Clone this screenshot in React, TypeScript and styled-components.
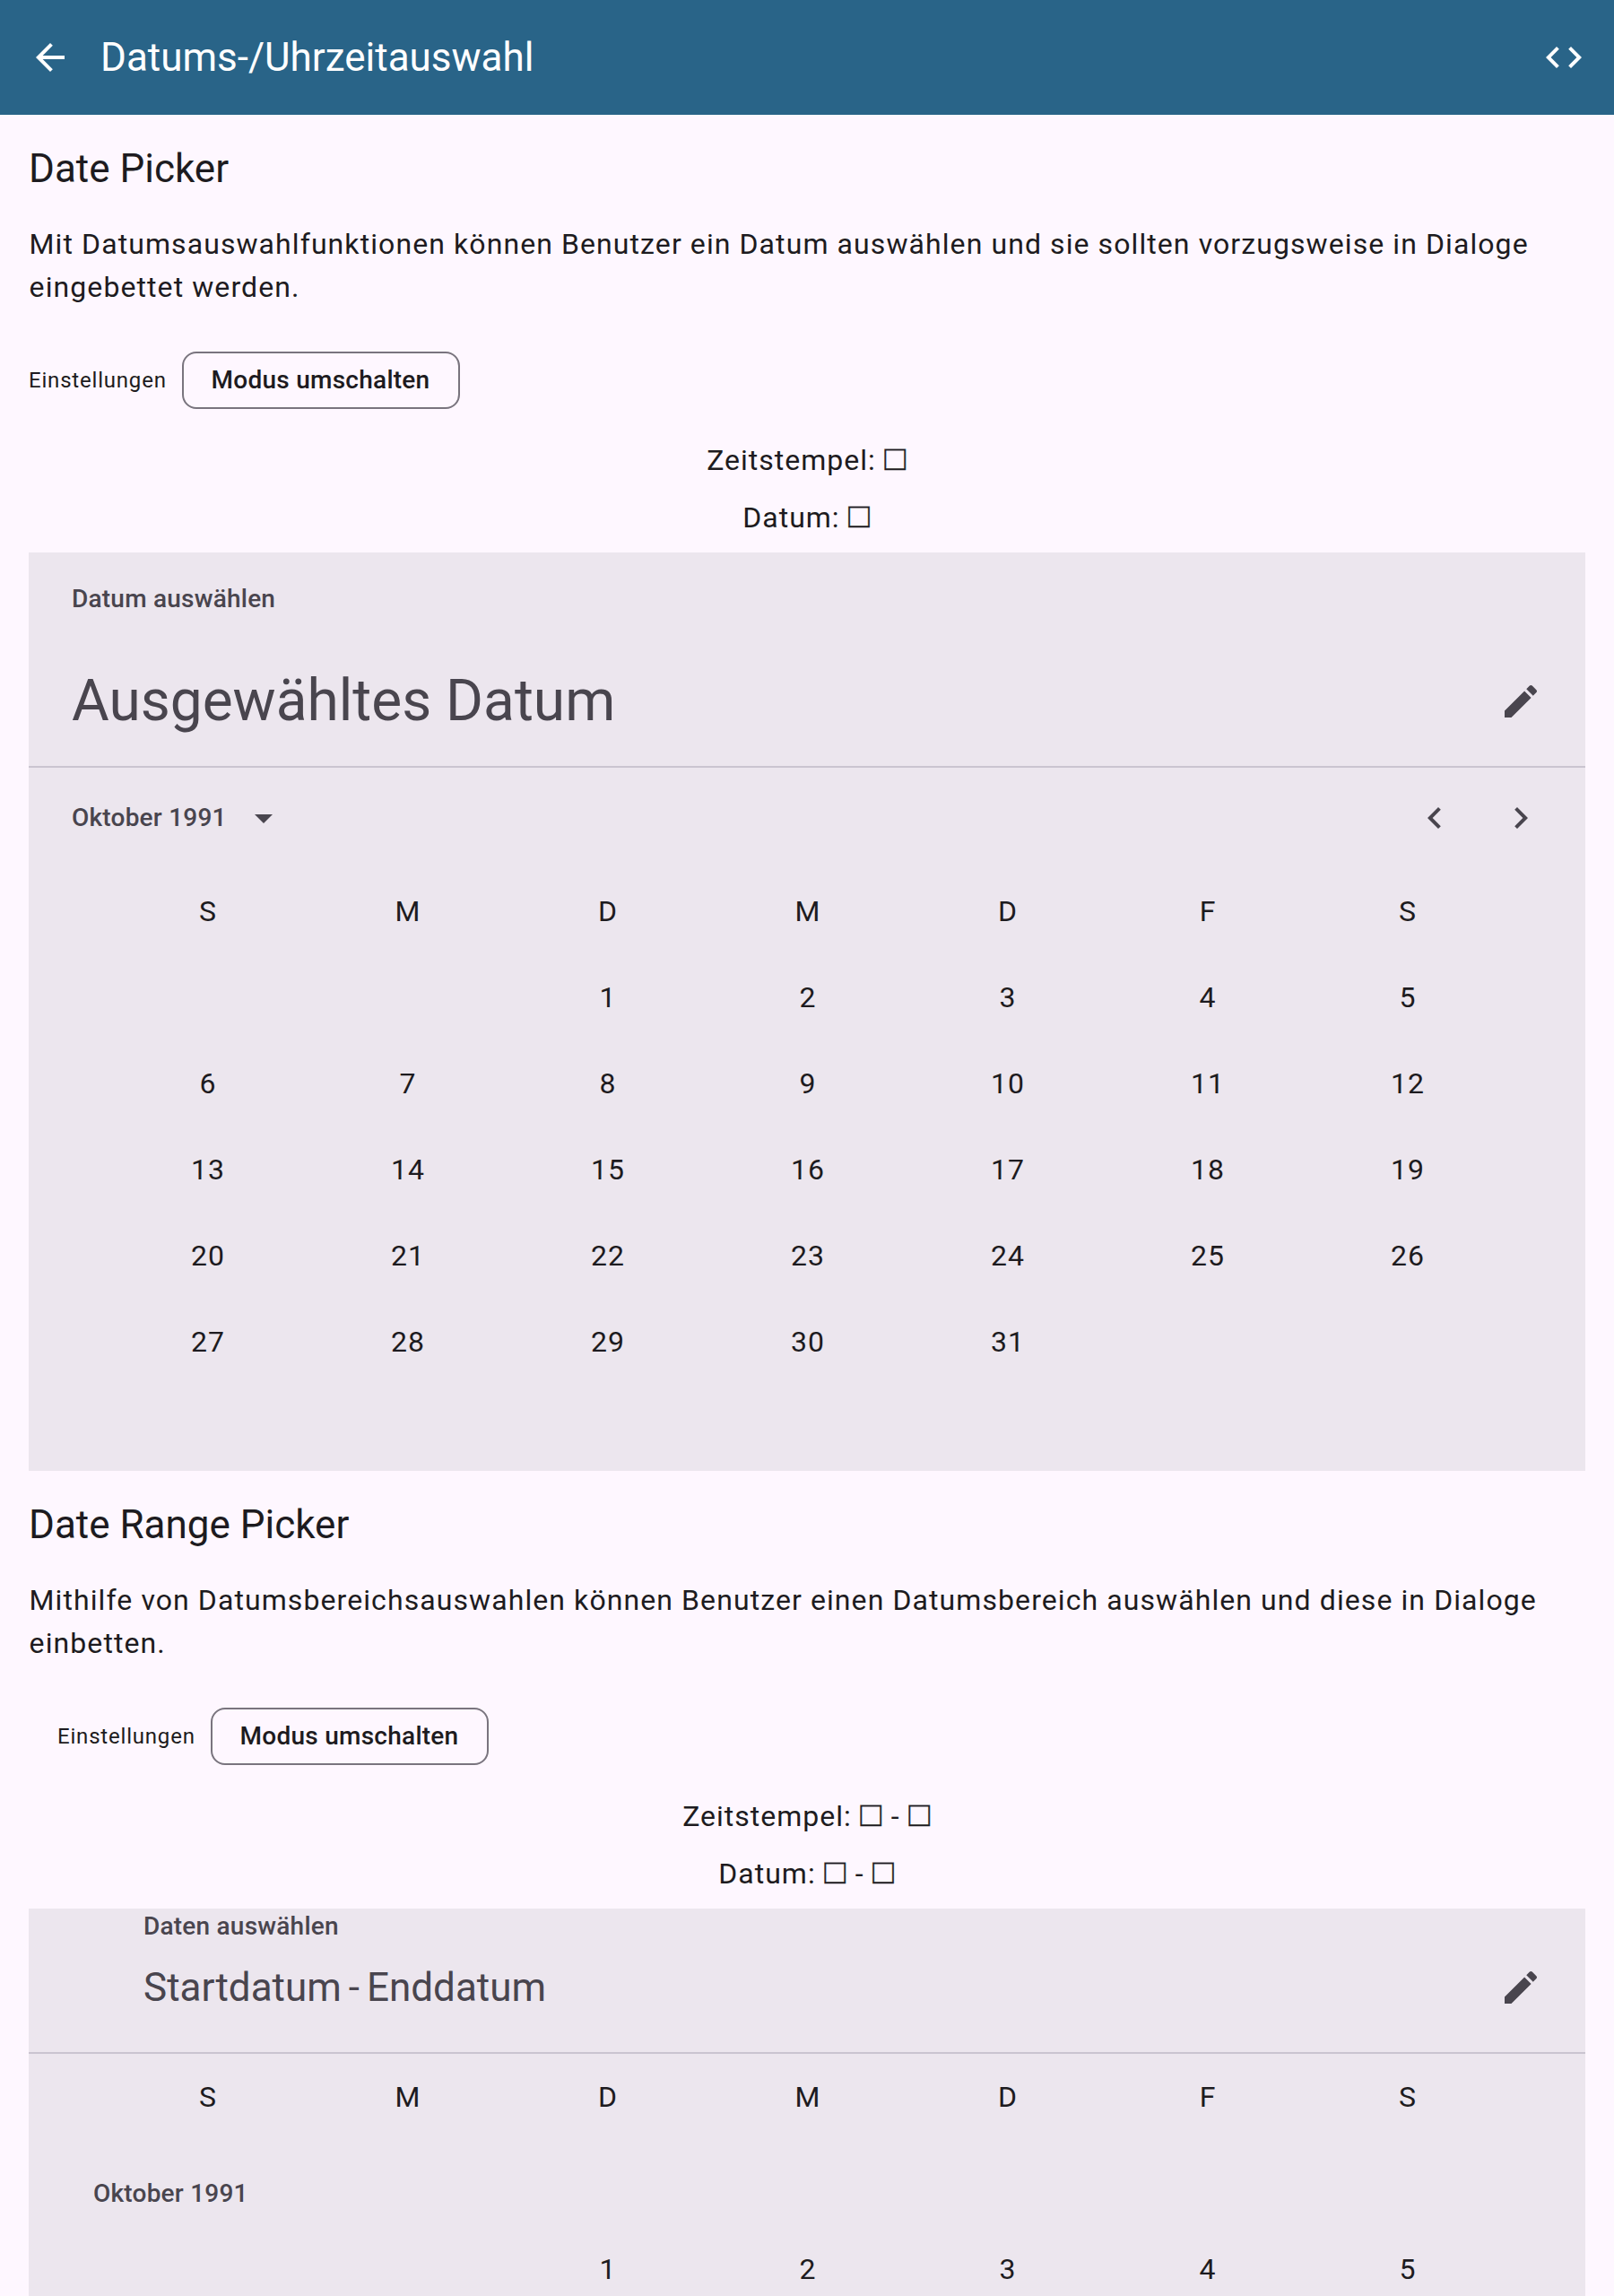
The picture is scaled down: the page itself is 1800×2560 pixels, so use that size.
import React from "react";
import styled, { createGlobalStyle } from "styled-components";

const color = {
  bar: "#296488",
  onBar: "#ffffff",
  surface: "#fef7ff",
  panel: "#ece6ee",
  text: "#1d1b20",
  muted: "#49454e",
  outline: "#79747e",
  divider: "#cac4d0",
};

const GlobalStyle = createGlobalStyle`
  * { box-sizing: border-box; }
  html, body { margin: 0; padding: 0; }
  body {
    background: ${color.surface};
    color: ${color.text};
    font-family: Roboto, "Noto Sans", sans-serif;
    overflow: hidden;
  }
  h1, h2, p { margin: 0; font-weight: 400; }
  button { font: inherit; color: inherit; background: none; border: 0; padding: 0; }
`;

const Screen = styled.div`
  width: 1800px;
  height: 2560px;
  overflow: hidden;
  background: ${color.surface};
`;

const AppBar = styled.header`
  display: flex;
  align-items: center;
  height: 128px;
  padding: 0 32px;
  background: ${color.bar};
  color: ${color.onBar};
`;

const AppTitle = styled.h1`
  flex: 1;
  margin-left: 32px;
  font-size: 44px;
  line-height: 56px;
`;

const PlainButton = styled.button`
  display: flex;
`;

const Icon = styled.svg`
  display: block;
  width: 48px;
  height: 48px;
  fill: currentColor;
`;

const Content = styled.main`
  padding: 0 32px;
`;

const Section = styled.section`
  padding-top: 32px;
`;

const SectionTitle = styled.h2`
  font-size: 44px;
  line-height: 56px;
`;

const Description = styled.p`
  margin-top: 32px;
  padding-left: 0.6px;
  font-size: 32px;
  line-height: 48px;
  letter-spacing: 1.085px;
`;

const Settings = styled.div<{ $inset: number }>`
  display: flex;
  align-items: center;
  gap: 16px;
  margin-top: 48px;
  padding-left: ${(p) => p.$inset}px;
`;

const SettingsLabel = styled.span`
  width: 155px;
  font-size: 24px;
  line-height: 32px;
  letter-spacing: 0.8px;
`;

const OutlinedButton = styled.button`
  width: 310px;
  height: 64px;
  padding-right: 1px;
  border: 2px solid ${color.outline};
  border-radius: 16px;
  font-size: 28px;
  font-weight: 500;
  line-height: 40px;
  letter-spacing: 0.26px;
`;

const Values = styled.div`
  display: flex;
  flex-direction: column;
  align-items: center;
  gap: 16px;
  margin: 33px 0 15px;
`;

const Value = styled.p`
  height: 48px;
  font-size: 32px;
  line-height: 48px;
  letter-spacing: 1px;
`;

const Placeholder = styled.span`
  margin: 0 0.8px;
  font-family: "Liberation Sans", sans-serif;
  font-size: 39px;
  line-height: 0;
  -webkit-text-stroke: 0.4px currentColor;
`;

const Panel = styled.div`
  background: ${color.panel};
`;

const PanelHeader = styled.div<{ $height: number; $inset: number; $top: number }>`
  display: flex;
  flex-direction: column;
  justify-content: space-between;
  height: ${(p) => p.$height}px;
  padding: ${(p) => p.$top}px 24px 24px ${(p) => p.$inset}px;
  border-bottom: 2px solid ${color.divider};
  color: ${color.muted};
`;

const Label = styled.span`
  font-size: 28px;
  font-weight: 500;
  line-height: 40px;
  letter-spacing: 0.22px;
`;

const HeadlineRow = styled.div`
  display: flex;
  align-items: center;
  justify-content: space-between;
`;

const Headline = styled.span`
  font-size: 64px;
  line-height: 80px;
`;

const RangeHeadline = styled.div`
  display: flex;
  gap: 8px;
  font-size: 44px;
  line-height: 56px;
`;

const IconButton = styled.button`
  display: flex;
  align-items: center;
  justify-content: center;
  width: 96px;
  height: 96px;
`;

const MonthBar = styled.div`
  display: flex;
  align-items: center;
  justify-content: space-between;
  height: 112px;
  padding: 0 24px 0 48px;
  color: ${color.muted};
`;

const YearButton = styled.button`
  display: flex;
  align-items: center;
  gap: 17px;
`;

const Arrows = styled.div`
  display: flex;
`;

const Week = styled.div`
  display: flex;
  justify-content: space-evenly;
  height: 96px;
  padding: 0 23px 0 25px;
`;

const Day = styled.span`
  width: 96px;
  text-align: center;
  font-size: 32px;
  line-height: 96px;
  letter-spacing: 1px;
`;

const MonthHeading = styled.div`
  display: flex;
  padding: 40px 0 16px 72px;
  color: ${color.muted};
`;

const WEEKDAYS = ["S", "M", "D", "M", "D", "F", "S"];

/* Oktober 1991 beginnt an einem Dienstag. */
const OFFSET = 2;
const DAYS = 31;
const WEEKS = Array.from({ length: 6 }, (_, w) =>
  Array.from({ length: 7 }, (_, d) => {
    const day = w * 7 + d - OFFSET + 1;
    return day >= 1 && day <= DAYS ? String(day) : "";
  }),
);

const paths = {
  back: "M20 11H7.83l5.59-5.59L12 4l-8 8 8 8 1.41-1.41L7.83 13H20v-2z",
  code: "M9.4 16.6 4.8 12l4.6-4.6L8 6l-6 6 6 6 1.4-1.4zm5.2 0 4.6-4.6-4.6-4.6L16 6l6 6-6 6-1.4-1.4z",
  edit: "M3 17.25V21h3.75L17.81 9.94l-3.75-3.75L3 17.25zM20.71 7.04c.39-.39.39-1.02 0-1.41l-2.34-2.34c-.39-.39-1.02-.39-1.41 0l-1.83 1.83 3.75 3.75 1.83-1.83z",
  dropDown: "M7 10l5 5 5-5z",
  left: "M15.41 16.59 10.83 12l4.58-4.59L14 6l-6 6 6 6 1.41-1.41z",
  right: "M8.59 16.59 13.17 12 8.59 7.41 10 6l6 6-6 6-1.41-1.41z",
};

const Glyph = ({ name }: { name: keyof typeof paths }) => (
  <Icon viewBox="0 0 24 24" aria-hidden="true">
    <path d={paths[name]} />
  </Icon>
);

const WeekRow = ({ cells }: { cells: string[] }) => (
  <Week>
    {cells.map((cell, i) => (
      <Day key={i}>{cell}</Day>
    ))}
  </Week>
);

const EmptyValue = ({ range }: { range: boolean }) => (
  <>
    <Placeholder>□</Placeholder>
    {range && (
      <>
        {" - "}
        <Placeholder>□</Placeholder>
      </>
    )}
  </>
);

const Controls = ({ inset = 0, range = false }: { inset?: number; range?: boolean }) => (
  <>
    <Settings $inset={inset}>
      <SettingsLabel>Einstellungen</SettingsLabel>
      <OutlinedButton>Modus umschalten</OutlinedButton>
    </Settings>
    <Values>
      <Value>
        Zeitstempel: <EmptyValue range={range} />
      </Value>
      <Value>
        Datum: <EmptyValue range={range} />
      </Value>
    </Values>
  </>
);

export default function App() {
  return (
    <Screen>
      <GlobalStyle />
      <AppBar>
        <PlainButton aria-label="Zurück">
          <Glyph name="back" />
        </PlainButton>
        <AppTitle>Datums-/Uhrzeitauswahl</AppTitle>
        <PlainButton aria-label="Quellcode">
          <Glyph name="code" />
        </PlainButton>
      </AppBar>
      <Content>
        <Section>
          <SectionTitle>Date Picker</SectionTitle>
          <Description>
            Mit Datumsauswahlfunktionen können Benutzer ein Datum auswählen und sie sollten
            vorzugsweise in Dialoge eingebettet werden.
          </Description>
          <Controls />
          <Panel>
            <PanelHeader $height={240} $inset={48} $top={32}>
              <Label>Datum auswählen</Label>
              <HeadlineRow>
                <Headline>Ausgewähltes Datum</Headline>
                <IconButton aria-label="Bearbeiten">
                  <Glyph name="edit" />
                </IconButton>
              </HeadlineRow>
            </PanelHeader>
            <MonthBar>
              <YearButton>
                <Label>Oktober 1991</Label>
                <Glyph name="dropDown" />
              </YearButton>
              <Arrows>
                <IconButton aria-label="Vorheriger Monat">
                  <Glyph name="left" />
                </IconButton>
                <IconButton aria-label="Nächster Monat">
                  <Glyph name="right" />
                </IconButton>
              </Arrows>
            </MonthBar>
            <WeekRow cells={WEEKDAYS} />
            {WEEKS.map((cells, i) => (
              <WeekRow key={i} cells={cells} />
            ))}
          </Panel>
        </Section>
        <Section>
          <SectionTitle>Date Range Picker</SectionTitle>
          <Description>
            Mithilfe von Datumsbereichsauswahlen können Benutzer einen Datumsbereich auswählen und
            diese in Dialoge einbetten.
          </Description>
          <Controls inset={32} range />
          <Panel>
            <PanelHeader $height={162} $inset={128} $top={0}>
              <Label>Daten auswählen</Label>
              <HeadlineRow>
                <RangeHeadline>
                  <span>Startdatum</span>
                  <span>-</span>
                  <span>Enddatum</span>
                </RangeHeadline>
                <IconButton aria-label="Bearbeiten">
                  <Glyph name="edit" />
                </IconButton>
              </HeadlineRow>
            </PanelHeader>
            <WeekRow cells={WEEKDAYS} />
            <MonthHeading>
              <Label>Oktober 1991</Label>
            </MonthHeading>
            <WeekRow cells={WEEKS[0]} />
          </Panel>
        </Section>
      </Content>
    </Screen>
  );
}
